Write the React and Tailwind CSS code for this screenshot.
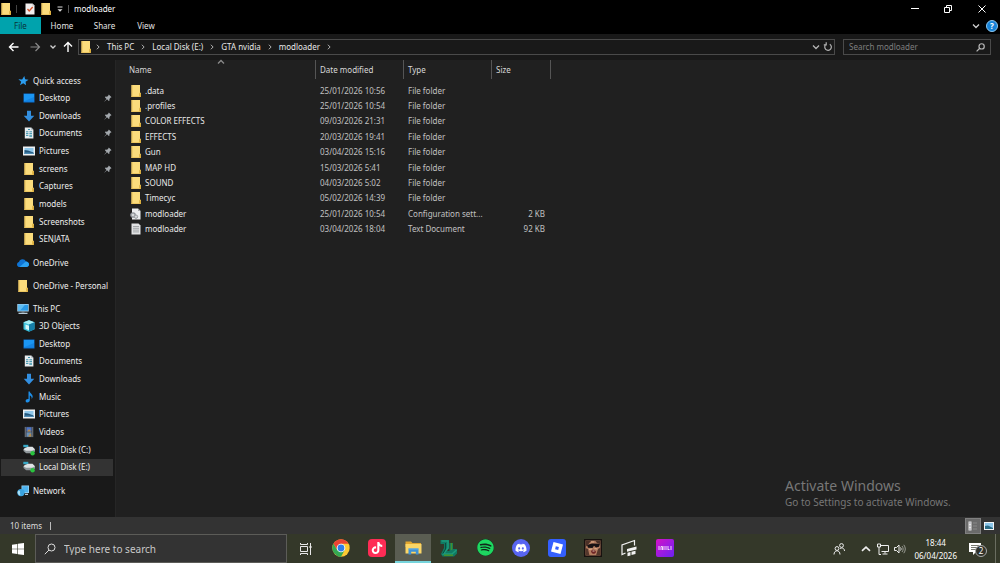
import React, { useState } from "react";
import { FaDiscord, FaSpotify, FaTiktok } from "react-icons/fa";

const FolderIcon = () => (
    <svg className="w-3 h-3 shrink-0" viewBox="0 0 12 12">
        <path d="M1.500 0H10v7.500l1 .8V12H1.500z" fill="#fbdc7c" />
        <path d="M1.500 0h1v12h-1z" fill="#e6bd58" />
        <path d="M9.200 8.500 10 7.500l1 1V12H9.200z" fill="#dcae3e" />
        <path d="M1.500 11.200H10v.8H1.500z" fill="#eac25b" />
    </svg>
);

const StarIcon = () => (
    <svg className="w-3 h-3 shrink-0" viewBox="0 0 12 12">
        <path
            d="m7.300 1 .8 3.200 3.400.6-2.900 1.900.4 3.600-2.800-2-3.200 1.900 1.200-3.500L1.400 4.300l3.700.2z"
            fill="#2b9df0"
        />
    </svg>
);

const DesktopIcon = () => (
    <svg className="w-3 h-3 shrink-0" viewBox="0 0 12 12">
        <path d="M.5 1.500h11v9H.5z" fill="#0b6fd0" />
        <path d="M1 2h10v7.300H1z" fill="#1b96f3" />
        <path d="M1 9.300 11 5v4.300z" fill="#1484e3" />
    </svg>
);

const DownloadIcon = () => (
    <svg className="w-3 h-3 shrink-0" viewBox="0 0 12 12">
        <path d="M4 .8h4v5h3.300L6 11.500.7 5.800H4z" fill="#338fe0" />
    </svg>
);

const DocumentIcon = () => (
    <svg className="w-3 h-3 shrink-0" viewBox="0 0 12 12">
        <path d="M1.800.5h6.400l2.200 2.200v8.800H1.800z" fill="#e6ebee" />
        <path d="M8.200.5v2.200h2.200z" fill="#a9b4bb" />
        <path
            d="M5 2.500h2M3 4.800h2.400M6.400 4.800H9M3 6.600h2.400M6.400 6.600H9M3 8.400h2.400"
            stroke="#3c93ad"
            strokeWidth="1"
        />
        <path d="M6.300 7.800H9v2.200H6.300z" fill="#63aabd" />
    </svg>
);

const PictureIcon = () => (
    <svg className="w-3 h-3 shrink-0" viewBox="0 0 12 12">
        <path d="M0 1.500h12v9H0z" fill="#eef1f3" />
        <path d="M1.500 3h9v6h-9z" fill="#8fc7ea" />
        <path d="m1.500 5 3.500.4 5.500 2V9h-9z" fill="#23577d" />
        <path d="M1.500 7.800c3-.6 6-.4 9 .1V9h-9z" fill="#4c8bb4" />
    </svg>
);

const CloudIcon = () => (
    <svg className="w-3 h-3 shrink-0" viewBox="0 0 12 12">
        <path
            d="M3 10C1 10 0 8.800 0 7.400 0 6 1 5.200 2 5c.4-1.800 1.800-2.800 3.500-2.800 1.600 0 2.800.9 3.300 2.200C10.700 4.500 12 5.700 12 7.300 12 9 10.800 10 9.400 10z"
            fill="#0f74d4"
        />
        <path d="M2.500 10 8.800 4.400C10.700 4.500 12 5.700 12 7.300 12 9 10.800 10 9.400 10z" fill="#2ba1f2" />
    </svg>
);

const ComputerIcon = () => (
    <svg className="w-3 h-3 shrink-0" viewBox="0 0 12 12">
        <path d="M.3 1h11.400v7.500H.3z" fill="#b7dcf2" />
        <path d="M1 1.700h10v6H1z" fill="#2b9ae6" />
        <path d="M1 1.700h7L3 7.700H1z" fill="#5fbdf3" />
        <path d="M4.500 8.500h3v1h-3z" fill="#8494a0" />
        <path d="M1.500 9.700h9v1.300h-9z" fill="#b9cbd7" />
    </svg>
);

const CubeIcon = () => (
    <svg className="w-3 h-3 shrink-0" viewBox="0 0 12 12">
        <path d="m6 .3 5.500 2v6.900L6 11.700.5 9.200V2.300z" fill="#3cc3dc" />
        <path d="M6 .3 11.500 2.300 6 4.500.5 2.300z" fill="#a6edf4" />
        <path d="M6 4.500 11.500 2.300v6.900L6 11.700z" fill="#157fa9" />
        <path d="m2.500 4.500 3.500 1.200v4.600L2.500 8.700z" fill="#d6f7fa" />
    </svg>
);

const MusicIcon = () => (
    <svg className="w-3 h-3 shrink-0" viewBox="0 0 12 12">
        <path
            d="M5.500.5h1.300c.2 2 2.900 2.600 2.900 5 0 1-.4 1.800-1 2.400.3-2-1-3-1.900-3.300v4.700c0 1.300-1 2.200-2.300 2.200-1.200 0-1.900-.6-1.900-1.500 0-1.300 1.400-2.200 2.900-1.900z"
            fill="#1d8fea"
        />
    </svg>
);

const VideoIcon = () => (
    <svg className="w-3 h-3 shrink-0" viewBox="0 0 12 12">
        <path d="M1.500.8h9v10.400h-9z" fill="#3b3f46" />
        <path d="M3.500 1.200h5v4.400h-5z" fill="#4d74c4" />
        <path d="M3.500 6.300h5v4.500h-5z" fill="#6a8fb5" />
        <path d="m4 5.400 2-2.500 2.300 2.500M5 10.500 7.500 7l1 3.500z" fill="#b78a45" />
        <path
            d="M2.400 1.500v9.500M9.600 1.500v9.500"
            stroke="#a3a8ae"
            strokeWidth=".9"
            strokeDasharray="1 1"
        />
    </svg>
);

const DiskIcon = () => (
    <svg className="w-3 h-3 shrink-0" viewBox="0 0 12 12">
        <path d="M.3.8h5v2.400h-5z" fill="#38a9c7" />
        <path d="M1.800 4 5 2.800h4.500L12 5.300v1L9 8.500H3L.5 5.300z" fill="#dfe3e5" />
        <path d="M.5 5.300 3 6.700h6l3-1.400v2.200L9 9.200H3.300L.5 7z" fill="#8f979b" />
        <circle cx="9.600" cy="9.300" r="2.200" fill="#29c23e" />
    </svg>
);

const NetworkIcon = () => (
    <svg className="w-3 h-3 shrink-0" viewBox="0 0 12 12">
        <path d="M4.500.5H12V8H4.500z" fill="#9ed6f5" />
        <path d="M5.200 1.200h6.100v6.100H5.200z" fill="#4db2ee" />
        <circle cx="4" cy="7.600" r="3.700" fill="#3aa3df" />
        <path d="M1.500 5.500c1.500 0 2 1 1.500 2s1 1.500 0 3C1 10 .3 8 .7 6.800z" fill="#a9dff5" />
        <path d="M8 8.700h3v1.300H8z" fill="#b9cbd7" />
    </svg>
);

const ConfigIcon = () => (
    <svg className="w-3 h-3 shrink-0" viewBox="0 0 12 12">
        <path d="M2 .5h6L10.500 3v8.500H2z" fill="#eceef0" />
        <path d="M8 .5V3h2.500z" fill="#a5a8ab" />
        <circle cx="3" cy="7" r="2.200" fill="#d5d8da" stroke="#8c9197" strokeWidth="1.300" />
        <circle cx="6" cy="8.700" r="1.700" fill="#d5d8da" stroke="#9a9fa4" strokeWidth="1" />
    </svg>
);

const TextIcon = () => (
    <svg className="w-3 h-3 shrink-0" viewBox="0 0 12 12">
        <path d="M1.500.5h7l2 2v9h-9z" fill="#e1e2e3" />
        <path
            d="M3 3.500h6M3 5.300h6M3 7.100h6M3 8.900h6"
            stroke="#94979a"
            strokeWidth=".8"
        />
    </svg>
);

const PinIcon = () => (
    <svg className="w-2 h-2 shrink-0" viewBox="0 0 8 8">
        <path
            d="m4.800.4 2.800 2.800-.9.3-1.300 1.400.1 1.500-.7.6-1.700-1.700L.6 7.600l-.3-.2L2.500 4.900.900 3.300l.6-.7 1.600.1 1.400-1.400z"
            fill="#a3a8ad"
        />
    </svg>
);

const Chevron = ({ className, d, stroke = "#b5b5b5" }) => (
    <svg className={className} viewBox="0 0 8 8" fill="none" stroke={stroke}>
        <path d={d} strokeWidth="1.300" />
    </svg>
);

const SearchIcon = ({ className, stroke, strokeWidth = 1 }) => (
    <svg
        className={className}
        viewBox="0 0 12 12"
        fill="none"
        stroke={stroke}
        strokeWidth={strokeWidth}
    >
        <circle cx="7.500" cy="4.500" r="3.500" />
        <path d="M5 7 .8 11.200" />
    </svg>
);

const quickAccess = [
    { name: "Desktop", icon: DesktopIcon, pinned: true },
    { name: "Downloads", icon: DownloadIcon, pinned: true },
    { name: "Documents", icon: DocumentIcon, pinned: true },
    { name: "Pictures", icon: PictureIcon, pinned: true },
    { name: "screens", icon: FolderIcon, pinned: true },
    { name: "Captures", icon: FolderIcon },
    { name: "models", icon: FolderIcon },
    { name: "Screenshots", icon: FolderIcon },
    { name: "SENJATA", icon: FolderIcon },
];

const thisPc = [
    { name: "3D Objects", icon: CubeIcon },
    { name: "Desktop", icon: DesktopIcon },
    { name: "Documents", icon: DocumentIcon },
    { name: "Downloads", icon: DownloadIcon },
    { name: "Music", icon: MusicIcon },
    { name: "Pictures", icon: PictureIcon },
    { name: "Videos", icon: VideoIcon },
    { name: "Local Disk (C:)", icon: DiskIcon },
    { name: "Local Disk (E:)", icon: DiskIcon, active: true },
];

const files = [
    { name: ".data", date: "25/01/2026 10:56", type: "File folder" },
    { name: ".profiles", date: "25/01/2026 10:54", type: "File folder" },
    { name: "COLOR EFFECTS", date: "09/03/2026 21:31", type: "File folder" },
    { name: "EFFECTS", date: "20/03/2026 19:41", type: "File folder" },
    { name: "Gun", date: "03/04/2026 15:16", type: "File folder" },
    { name: "MAP HD", date: "15/03/2026 5:41", type: "File folder" },
    { name: "SOUND", date: "04/03/2026 5:02", type: "File folder" },
    { name: "Timecyc", date: "05/02/2026 14:39", type: "File folder" },
    {
        name: "modloader",
        date: "25/01/2026 10:54",
        type: "Configuration sett...",
        size: "2 KB",
        icon: ConfigIcon,
    },
    {
        name: "modloader",
        date: "03/04/2026 18:04",
        type: "Text Document",
        size: "92 KB",
        icon: TextIcon,
    },
];

const crumbs = ["This PC", "Local Disk (E:)", "GTA nvidia", "modloader"];

const NavRow = ({ item, root }) => {
    const Icon = item.icon;
    return (
        <a
            href="#"
            className={`flex items-center gap-1 h-[17px] pr-px whitespace-nowrap ${
                root ? "pl-4" : "pl-[22px]"
            } ${item.active ? "bg-[#333333]" : ""}`}
        >
            <Icon />
            <span>{item.name}</span>
            {item.pinned && (
                <span className="ml-auto">
                    <PinIcon />
                </span>
            )}
        </a>
    );
};

const TitleBar = () => (
    <header className="flex items-center h-[17px] bg-black text-white">
        <FolderIcon />
        <span className="w-px h-2 ml-1 bg-[#444444]" />
        <button aria-label="Properties" className="ml-[7px]">
            <svg className="w-3 h-3" viewBox="0 0 12 12">
                <path d="M1.500.5h7l2 2v9h-9z" fill="#f1eeee" />
                <path d="M8.500.5v2h2z" fill="#b5b5b5" />
                <path d="m3.500 6 1.700 2L8.700 4" fill="none" stroke="#d9532c" strokeWidth="1.300" />
            </svg>
        </button>
        <button aria-label="New folder" className="ml-1">
            <FolderIcon />
        </button>
        <button aria-label="Customize Quick Access Toolbar" className="ml-1">
            <svg className="w-2 h-2" viewBox="0 0 8 8">
                <path d="M1.500 2h5" stroke="#ddd" />
                <path d="M1.500 4.200h5L4 6.800z" fill="#ddd" />
            </svg>
        </button>
        <span className="w-px h-2 ml-1 bg-[#555555]" />
        <h1 className="ml-[5px]">modloader</h1>
        <div className="flex items-center ml-auto">
            <button aria-label="Minimize" className="flex justify-center w-[33px]">
                <svg className="w-2 h-2" viewBox="0 0 8 8">
                    <path d="M0 3.500h8" stroke="#fff" />
                </svg>
            </button>
            <button aria-label="Restore" className="flex justify-center w-[33px]">
                <svg className="w-2 h-2" viewBox="0 0 8 8" fill="none" stroke="#fff">
                    <path d="M.5 2.500h5v5h-5zM2.500 2.500v-2h5v5h-2" />
                </svg>
            </button>
            <button aria-label="Close" className="flex justify-center w-9">
                <svg className="w-2 h-2" viewBox="0 0 8 8">
                    <path d="m.5.5 7 7M7.500.5l-7 7" stroke="#fff" />
                </svg>
            </button>
        </div>
    </header>
);

const Ribbon = () => (
    <nav className="flex items-center h-[17px] bg-black text-[#e4e4e4]">
        <button className="w-[41px] h-full bg-[#00a3ad] text-[#083438]">File</button>
        <button className="w-[42px]">Home</button>
        <button className="w-[43px]">Share</button>
        <button className="w-10">View</button>
        <button aria-label="Expand the ribbon" className="ml-auto">
            <Chevron className="w-2 h-2" d="m1 2.500 3 3 3-3" stroke="#d0d0d0" />
        </button>
        <button
            aria-label="Help"
            className="w-3 h-3 ml-1.5 mr-0.5 rounded-full border border-[#8cc6ef] bg-[#1683d8] text-white font-bold leading-[10px]"
        >
            ?
        </button>
    </nav>
);

const AddressBar = () => {
    const [query, setQuery] = useState("");

    return (
        <div className="flex items-center h-[26px] pl-2 pr-[9px] bg-[#191919]">
            <button aria-label="Back">
                <svg className="w-3 h-3" viewBox="0 0 12 12" fill="none" stroke="#fff" strokeWidth="1.400">
                    <path d="M10.500 6h-9M5.500 2l-4 4 4 4" />
                </svg>
            </button>
            <button aria-label="Forward" className="ml-[9px]">
                <svg className="w-3 h-3" viewBox="0 0 12 12" fill="none" stroke="#8a8a8a" strokeWidth="1.200">
                    <path d="M1.500 6h9M6.500 2l4 4-4 4" />
                </svg>
            </button>
            <button aria-label="Recent locations" className="ml-2">
                <Chevron className="w-2 h-2" d="m1.500 2.500 2.500 2.500L6.500 2.500" stroke="#d0d0d0" />
            </button>
            <button aria-label="Up" className="ml-[5px]">
                <svg className="w-3 h-3" viewBox="0 0 12 12" fill="none" stroke="#fff" strokeWidth="1.400">
                    <path d="M6 11V1.500M2 5.500l4-4 4 4" />
                </svg>
            </button>
            <div className="flex flex-1 items-center h-4 ml-1 px-px border border-[#4a4a4a] text-[#e8e8e8]">
                <FolderIcon />
                <Chevron className="w-1.5 h-1.5 ml-[3px]" d="m2.500 1 3 3-3 3" />
                {crumbs.map((crumb) => (
                    <React.Fragment key={crumb}>
                        <button className="ml-1.5">{crumb}</button>
                        <Chevron className="w-1.5 h-1.5 ml-1.5" d="m2.500 1 3 3-3 3" />
                    </React.Fragment>
                ))}
                <button aria-label="Previous locations" className="ml-auto">
                    <Chevron className="w-2 h-2" d="m1 2.500 3 3 3-3" />
                </button>
                <button aria-label="Refresh" className="ml-[3px]">
                    <svg className="w-2.5 h-2.5" viewBox="0 0 10 10" fill="none" stroke="#b5b5b5" strokeWidth="1.200">
                        <path d="M6.800 2.200a3.300 3.300 0 1 1-3.800.2M3.200.3v2.500H.8" />
                    </svg>
                </button>
            </div>
            <label className="flex items-center w-[148px] h-4 ml-2 px-[5px] border border-[#4a4a4a]">
                <input
                    className="flex-1 min-w-0 bg-transparent outline-none placeholder:text-[#7e7e7e]"
                    aria-label="Search modloader"
                    placeholder="Search modloader"
                    value={query}
                    onChange={(e) => setQuery(e.target.value)}
                />
                <SearchIcon className="w-[9px] h-[9px]" stroke="#b8b8b8" strokeWidth={1.6} />
            </label>
        </div>
    );
};

const Sidebar = () => (
    <aside className="flex flex-col gap-1.5 w-[116px] shrink-0 pt-3 pl-px pr-0.5 border-r border-[#262626] bg-[#191919] text-[#eeeeee]">
        <div className="flex flex-col justify-between h-[176px]">
            <NavRow item={{ name: "Quick access", icon: StarIcon }} root />
            {quickAccess.map((item) => (
                <NavRow key={item.name} item={item} />
            ))}
        </div>
        <NavRow item={{ name: "OneDrive", icon: CloudIcon }} root />
        <NavRow item={{ name: "OneDrive - Personal", icon: FolderIcon }} root />
        <div className="flex flex-col justify-between h-[176px]">
            <NavRow item={{ name: "This PC", icon: ComputerIcon }} root />
            {thisPc.map((item) => (
                <NavRow key={item.name} item={item} />
            ))}
        </div>
        <NavRow item={{ name: "Network", icon: NetworkIcon }} root />
    </aside>
);

const FileTable = () => (
    <table className="table-fixed w-[435px] h-[177px] text-left text-[#c0c0c0]">
        <colgroup>
            <col className="w-[200px]" />
            <col className="w-[88px]" />
            <col className="w-[88px]" />
            <col className="w-[59px]" />
        </colgroup>
        <thead className="text-[#d8d8d8]">
            <tr className="h-[23px] align-top">
                <th className="relative p-0 font-normal">
                    <div className="flex items-center h-[19px] pl-[13px] border-r border-[#555555]">
                        Name
                    </div>
                    <Chevron
                        className="absolute -top-0.5 left-[101px] w-2 h-2"
                        d="m1 5.500 3-3 3 3"
                        stroke="#8a8a8a"
                    />
                </th>
                {["Date modified", "Type", "Size"].map((title) => (
                    <th key={title} className="p-0 font-normal">
                        <div className="flex items-center h-[19px] pl-1 border-r border-[#555555]">
                            {title}
                        </div>
                    </th>
                ))}
            </tr>
        </thead>
        <tbody>
            {files.map((file) => {
                const Icon = file.icon || FolderIcon;
                return (
                    <tr key={file.name + file.date}>
                        <td className="p-0 pl-[14px]">
                            <div className="flex items-center gap-[3px] text-[#e8e8e8]">
                                <Icon />
                                {file.name}
                            </div>
                        </td>
                        <td className="p-0 pl-1 whitespace-nowrap">{file.date}</td>
                        <td className="p-0 pl-1 whitespace-nowrap">{file.type}</td>
                        <td className="p-0 pr-1.5 text-right">{file.size}</td>
                    </tr>
                );
            })}
        </tbody>
    </table>
);

const StatusBar = () => (
    <footer className="flex items-center h-[17px] pl-2.5 bg-[#333333] text-[#dddddd]">
        <span>10 items</span>
        <span className="w-px h-2 ml-2 bg-[#bbbbbb]" />
        <button
            aria-label="Details view"
            className="flex items-center w-4 h-4 ml-auto pl-0.5 border border-[#808080] bg-[#6a6a6a]"
        >
            <svg className="w-2.5 h-2.5" viewBox="0 0 10 10">
                <path d="M.5.5h3v9h-3z" fill="#e6e6e6" />
                <path d="M1.500 2h1M1.500 5h1M1.500 8h1" stroke="#667" />
                <path d="M5 2h4M5 5h4M5 8h4" stroke="#888" />
            </svg>
        </button>
        <button aria-label="Large icons view" className="ml-[3px] mr-1.5">
            <svg className="w-2.5 h-2.5" viewBox="0 0 10 10">
                <path d="M0 1h10v8H0z" fill="#f2f4f6" />
                <path d="M1 2h8v6H1z" fill="#8cc6ea" />
                <path d="m1 5 3-.5L9 7v1H1z" fill="#2b6c86" />
            </svg>
        </button>
    </footer>
);

const ChromeIcon = () => (
    <svg className="w-[18px] h-[18px]" viewBox="0 0 18 18">
        <circle cx="9" cy="9" r="8.700" fill="#fcc934" />
        <path d="M1.500 4.600 5.300 11.100 9 13l-1 4.600A8.700 8.700 0 0 1 1.500 4.600z" fill="#34a853" />
        <path d="M5.300 11.100 9 13l3.700-1.900L9 17.700A8.700 8.700 0 0 1 5 16.700z" fill="#34a853" />
        <path d="M1.500 4.600A8.700 8.700 0 0 1 16.500 4.700H9L5.300 11.100z" fill="#ea4335" />
        <circle cx="9" cy="9" r="4.300" fill="#fff" />
        <circle cx="9" cy="9" r="3.400" fill="#2f7de9" />
    </svg>
);

const ExplorerIcon = () => (
    <svg className="w-[17px] h-4" viewBox="0 0 17 16">
        <path d="M.5 1.500h5.500l1.500 1.500H16v4H.5z" fill="#e3a72f" />
        <path d="M.5 4h16v9.500H.5z" fill="#fbd667" />
        <path d="M3.500 8.500h10v6h-2.700v-2.700H6.200v2.700H3.500z" fill="#3f92d6" />
        <path d="M3.500 8.500h10v1h-10z" fill="#67b1e6" />
    </svg>
);

const LegacyIcon = () => (
    <svg className="w-[18px] h-[18px]" viewBox="0 0 18 18">
        <path
            d="M.5 1H9v8.500L7 12h2.500V4h3.500v6h4v4.500L14 17.500H2.500L1 15l3-6V5H.5z"
            fill="#107a63"
        />
        <path d="M1.500 2H8v7l-4.500 6H12L16.500 11" fill="none" stroke="#1d9a7c" strokeWidth="1.500" />
        <path d="M11.500 4v7M4 16.200h9" stroke="#45902c" strokeWidth="1.500" />
        <path d="M5.500 4v6L3 14.500" stroke="#0a4b40" fill="none" />
    </svg>
);

const RobloxIcon = () => (
    <svg className="w-[18px] h-[18px]" viewBox="0 0 18 18">
        <rect width="18" height="18" rx="3" fill="#335fff" />
        <path d="M5.500 3 15 5.500 12.500 15 3 12.500zM7.800 7.200l-.7 3 3.100.7.700-3z" fill="#fff" fillRule="evenodd" />
    </svg>
);

const PortraitIcon = () => (
    <svg className="w-[18px] h-[18px]" viewBox="0 0 18 18">
        <path d="M0 0h18v18H0z" fill="#17110f" />
        <path d="M1.500 1.500h15v15h-15z" fill="#b37c60" />
        <path d="M1.500 1.500h6L4.500 5 1.500 8zM11 1.500h5.500V5L13 4z" fill="#4a3027" />
        <path d="m3 6 5-1.500 8 .3-1 3-3 .7-2-1.700L8.500 9 4 8.800z" fill="#181214" />
        <path d="M1.500 9 4 10l1.500 6.500h-4zM14 10l2.500-1.500v8H12z" fill="#54372c" />
        <path d="M7 12.500c.5-2.500 4-2.500 5 .2-.6 2.700-4 3-5-.2z" fill="#6d2526" />
        <path d="M5 10.500 8 10M10.500 9.500l3 .5M7 3h3" stroke="#e0ae88" />
        <path d="M8.500 12h2" stroke="#d9bba8" />
    </svg>
);

const StudioIcon = () => (
    <svg className="w-[18px] h-[18px]" viewBox="0 0 18 18">
        <path
            d="M5.500 14 2 15.500V6L14.500 1.500v5"
            fill="none"
            stroke="#f2f2f2"
            strokeWidth="1.200"
        />
        <path d="m7 10 9.500-2.500v3L7 12.800zM7.500 13.700l3-.8v3.600l-3 .8zM11.500 12.700l4-1v3.300l-4 1z" fill="#f2f2f2" />
    </svg>
);

const taskbarApps = [
    { name: "Google Chrome", icon: <ChromeIcon /> },
    {
        name: "TikTok",
        icon: (
            <span className="flex items-center justify-center w-[18px] h-[18px] rounded-sm bg-[#fe2c55]">
                <FaTiktok className="w-3 h-3 text-white" />
            </span>
        ),
    },
    { name: "File Explorer", icon: <ExplorerIcon />, active: true },
    { name: "Launcher", icon: <LegacyIcon /> },
    {
        name: "Spotify",
        icon: (
            <span className="rounded-full bg-[#11261a]">
                <FaSpotify className="w-[17px] h-[17px] text-[#1ed760]" />
            </span>
        ),
    },
    {
        name: "Discord",
        icon: (
            <span className="flex items-center justify-center w-[18px] h-[18px] rounded-full bg-[#5865f2]">
                <FaDiscord className="w-3 h-3 text-white" />
            </span>
        ),
    },
    { name: "Roblox", icon: <RobloxIcon /> },
    { name: "Game", icon: <PortraitIcon /> },
    { name: "Studio", icon: <StudioIcon /> },
    {
        name: "Inside",
        icon: (
            <svg className="w-[18px] h-[18px]" viewBox="0 0 18 18">
                <defs>
                    <linearGradient id="inside" x1="0" y1="0" x2="1" y2="1">
                        <stop offset="0" stopColor="#d512c4" />
                        <stop offset=".5" stopColor="#a01ae0" />
                        <stop offset="1" stopColor="#6a22f0" />
                    </linearGradient>
                </defs>
                <rect width="18" height="18" rx="2" fill="url(#inside)" />
                <path
                    d="M3 7v4M5 11V7.500h1.500V11M8 7v4M10 7v4M12 7v4M12 10.500h1.500M15 7v4"
                    fill="none"
                    stroke="#f3d8fb"
                />
            </svg>
        ),
    },
];

const Taskbar = () => {
    const [query, setQuery] = useState("");

    return (
        <div className="flex items-center h-[29px] bg-[#343829] text-white">
            <button aria-label="Start" className="flex justify-center w-[35px]">
                <svg className="w-3 h-3" viewBox="0 0 12 12" fill="#fff">
                    <path d="M0 1.700 5.300.9v4.800H0zM5.900.8 12 0v5.700H5.900zM0 6.300h5.300v4.800L0 10.300zM5.900 6.300H12V12l-6.100-.8z" />
                </svg>
            </button>
            <label className="flex items-center w-[252px] h-full pl-2 gap-2 border border-[#5c5c58] bg-[#333333]">
                <SearchIcon className="w-3 h-3" stroke="#dddddd" />
                <input
                    className="flex-1 min-w-0 bg-transparent outline-none text-[10px] placeholder:text-[#c8c8c8]"
                    aria-label="Type here to search"
                    placeholder="Type here to search"
                    value={query}
                    onChange={(e) => setQuery(e.target.value)}
                />
            </label>
            <button aria-label="Task View" className="flex justify-center w-9">
                <svg className="w-[13px] h-3" viewBox="0 0 13 12" fill="none" stroke="#e8e8e8">
                    <path d="M1.500 3.500h7v5h-7zM1.500 0v1.500h7V0M1.500 12v-1.500h7V12M11.500 0v12" />
                    <path d="M10.500 4h2" strokeWidth="2" />
                </svg>
            </button>
            <div className="flex h-full">
                {taskbarApps.map((app) => (
                    <button
                        key={app.name}
                        aria-label={app.name}
                        className={`flex items-center justify-center w-9 border-b-2 ${
                            app.active
                                ? "bg-[#5a5d52] border-b-[#76d4dc]"
                                : "border-b-transparent"
                        }`}
                    >
                        {app.icon}
                    </button>
                ))}
            </div>
            <div className="flex items-center h-full ml-auto">
                <button aria-label="People">
                    <svg className="w-3 h-3" viewBox="0 0 12 12" fill="none" stroke="#eeeeee">
                        <circle cx="4" cy="5.500" r="1.900" />
                        <circle cx="8.500" cy="2.500" r="1.900" />
                        <path d="M1 11.500c0-5 6-5 6 0M7 5.800c2-1.800 4.400-.5 4.500 2.200" />
                    </svg>
                </button>
                <button aria-label="Show hidden icons" className="ml-4">
                    <Chevron className="w-2.5 h-2.5" d="m.8 5.500 3.200-3 3.200 3" stroke="#eeeeee" />
                </button>
                <button aria-label="Network" className="ml-1.5">
                    <svg className="w-3 h-3" viewBox="0 0 12 12" fill="none" stroke="#eeeeee">
                        <path d="M3.500 2.500h8v6h-7M8 8.500v2M5.500 11h5M.5 1h3v3h-3zM2 4v7.500h2" />
                    </svg>
                </button>
                <button aria-label="Volume" className="ml-[5px]">
                    <svg className="w-3 h-3" viewBox="0 0 12 12" fill="none" stroke="#eeeeee">
                        <path d="M.5 4.500h2L5 2v8L2.500 7.500h-2zM6.500 4.500c.8 1 .8 2 0 3" />
                        <path d="M8 3c1.500 2 1.500 4 0 6M9.800 1.800c2 2.800 2 5.600 0 8.400" stroke="#9a9c94" />
                    </svg>
                </button>
                <button className="ml-2 text-center leading-[13px]">
                    <time className="block">18:44</time>
                    <time className="block">06/04/2026</time>
                </button>
                <button aria-label="Notifications" className="relative w-5 h-5 ml-3">
                    <svg className="w-3 h-3" viewBox="0 0 12 12">
                        <path d="M0 0h12v9H7l-3 3V9H0z" fill="#fff" />
                        <path d="M2 2.500h8M2 4.500h8M2 6.500h6" stroke="#55584c" strokeWidth=".8" />
                    </svg>
                    <span className="absolute left-1.5 top-1.5 flex items-center justify-center w-3 h-3 rounded-full border border-[#aaaaaa] bg-[#30322b]">
                        2
                    </span>
                </button>
                <span className="w-px h-full ml-1.5 mr-1 bg-[#6a6d60]" />
            </div>
        </div>
    );
};

const App = () => {
    return (
        <div className="flex flex-col min-h-screen bg-[#202020] font-['Noto_Sans','Open_Sans',sans-serif] text-[8px] leading-[12px] select-none">
            <TitleBar />
            <Ribbon />
            <AddressBar />
            <div className="relative flex flex-1">
                <Sidebar />
                <main className="flex-1">
                    <FileTable />
                </main>
                <div className="absolute right-[41px] bottom-2 w-[174px] text-[#777777]">
                    <p className="text-[14px] leading-[18px]">Activate Windows</p>
                    <p className="text-[10px] leading-[14px]">
                        Go to Settings to activate Windows.
                    </p>
                </div>
            </div>
            <StatusBar />
            <Taskbar />
        </div>
    );
};

export default App;
